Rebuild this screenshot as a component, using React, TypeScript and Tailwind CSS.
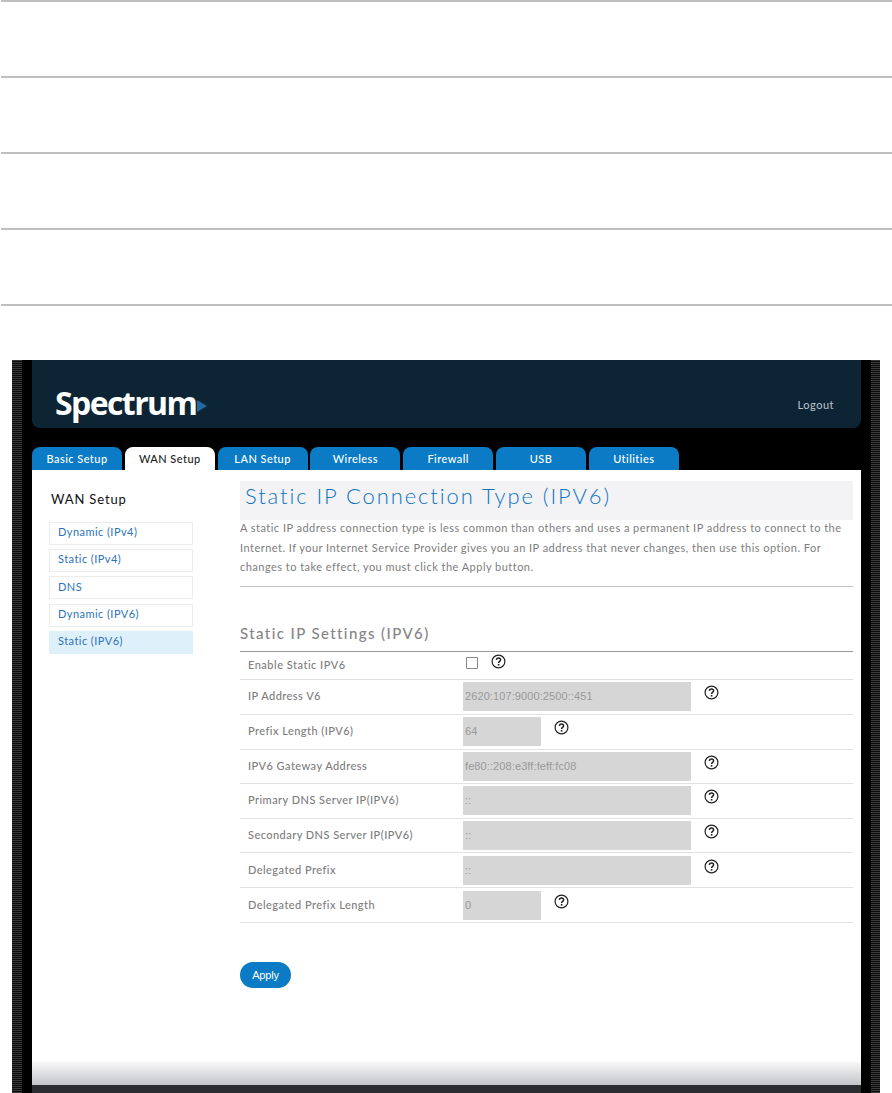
const F = "font-['Lato',_'Liberation_Sans',_sans-serif]";

function Help({ className = "" }: { className?: string }) {
  return (
    <svg width="15" height="15" viewBox="0 0 15 15" fill="none" className={className}>
      <circle cx="7.5" cy="7.5" r="6.4" stroke="#222" strokeWidth="1.2" />
      <path d="M5.4 5.9C5.5 4.6 6.4 4 7.5 4c1.2 0 2.1.7 2.1 1.8 0 1.5-2 1.6-2 3.2" stroke="#222" strokeWidth="1.5" />
      <rect x="6.8" y="10" width="1.6" height="1.6" fill="#222" />
    </svg>
  );
}

const tabs = ["Basic Setup", "WAN Setup", "LAN Setup", "Wireless", "Firewall", "USB", "Utilities"];
const side = ["Dynamic (IPv4)", "Static (IPv4)", "DNS", "Dynamic (IPV6)", "Static (IPV6)"];
const rows: { label: string; value: string; short?: boolean; h: string }[] = [
  { label: "IP Address V6", value: "2620:107:9000:2500::451", h: "h-[35px] pt-[2px]" },
  { label: "Prefix Length (IPV6)", value: "64", short: true, h: "h-[35px] pt-[2px]" },
  { label: "IPV6 Gateway Address", value: "fe80::208:e3ff:feff:fc08", h: "h-[34px] pt-[2px]" },
  { label: "Primary DNS Server IP(IPV6)", value: "::", h: "h-[35px] pt-[2px]" },
  { label: "Secondary DNS Server IP(IPV6)", value: "::", h: "h-[34px] pt-[2px]" },
  { label: "Delegated Prefix", value: "::", h: "h-[35px] pt-[3px]" },
  { label: "Delegated Prefix Length", value: "0", short: true, h: "h-[35px] pt-[3px]" },
];

const stripe = "bg-[repeating-linear-gradient(180deg,#3a3a3a_0px,#3a3a3a_1px,#0a0a0a_1px,#0a0a0a_2px)]";

export default function App() {
  return (
    <div className={`w-[892px] h-[1093px] overflow-hidden bg-white ${F}`}>
      <div className="pl-[1px] h-[360px]">
        {[0, 1, 2, 3, 4].map((i) => (
          <div key={i} className="h-[76px] border-t-2 border-[#bfbfbf]" />
        ))}
      </div>
      <div className="ml-[12px] w-[868px] h-[733px] flex bg-black">
        <div className={`${stripe} w-[10px] shrink-0`} />
        <div className="flex-1 px-[10px] flex flex-col min-w-0">
          <div className="h-[68px] shrink-0 bg-[#0d2435] rounded-b-lg flex items-center justify-between pl-[23px] pr-[27px]">
            <div className="flex items-center mt-[18px]">
              <span className="text-white text-[32px] font-bold tracking-[-1.6px] leading-none font-['Open_Sans',_sans-serif]">Spectrum</span>
              <svg width="10" height="12" viewBox="0 0 10 12" className="mt-[6px] ml-[1px]"><path d="M0 0L10 6L0 12Z" fill="#23689f" /></svg>
            </div>
            <span className="text-[11px] tracking-[0.5px] text-[#b8c4cc] mt-[22px]">Logout</span>
          </div>
          <div className="mt-[19px] h-[23px] flex gap-[2.8px] shrink-0">
            {tabs.map((t, i) => (
              <div
                key={t}
                className={`w-[90px] rounded-t-lg flex items-center justify-center pt-[2px] text-[11px] tracking-[0.45px] font-medium ${
                  i === 1 ? "bg-white text-[#222]" : "bg-[#0a7bc4] text-white"
                }`}
              >
                {t}
              </div>
            ))}
          </div>
          <div className="h-[615px] shrink-0 bg-white flex relative">
            <div className="w-[208px] shrink-0 pl-[17px] pt-[21px]">
              <div className="text-[13px] tracking-[0.85px] text-[#111] pl-[2px] leading-[16px]">WAN Setup</div>
              <div className="mt-[15px] w-[144px] flex flex-col gap-[4.2px]">
                {side.map((s, i) => (
                  <div
                    key={s}
                    className={`h-[23px] flex items-center pb-[2px] text-[11px] tracking-[0.45px] text-[#2c73b8] ${
                      i === 4 ? "bg-[#def0fa] pl-[9px]" : "border border-[#ececec] pl-[8px]"
                    }`}
                  >
                    {s}
                  </div>
                ))}
              </div>
            </div>
            <div className="w-[613px] shrink-0 pt-[11px]">
              <div className="h-[39px] bg-[#f3f3f6] pl-[5px] pt-[3px] text-[22px] leading-[24px] tracking-[1.9px] font-light text-[#0f75c0]">
                Static IP Connection Type (IPV6)
              </div>
              <p className="mt-[-2px] text-[11px] leading-[19.6px] tracking-[0.47px] text-[#7d7d7d]">
                A static IP address connection type is less common than others and uses a permanent IP address to connect to the Internet. If your Internet Service Provider gives you an IP address that never changes, then use this option. For changes to take effect, you must click the Apply button.
              </p>
              <div className="mt-[9px] border-t border-[#c4c4c4]" />
              <div className="mt-[37px] text-[15px] leading-[18px] tracking-[1.4px] text-[#858585] font-medium">Static IP Settings (IPV6)</div>
              <div className="mt-[9px] border-t border-[#999]">
                <div className="h-[28px] border-b border-[#ddd] flex">
                  <div className="w-[223px] pl-[8px] pt-[5px] text-[11px] tracking-[0.5px] text-[#7d7d7d] font-medium">Enable Static IPV6</div>
                  <div className="ml-[3px] mt-[5px] w-[12px] h-[12px] border border-[#888] bg-white rounded-[1px]" />
                  <Help className="ml-[13px] mt-[2px]" />
                </div>
                {rows.map((r) => (
                  <div key={r.label} className={`${r.h} border-b border-[#e2e2e2]`}>
                    <div className="h-[29px] flex items-center">
                      <div className="w-[223px] pl-[8px] text-[11px] tracking-[0.45px] text-[#7d7d7d] font-medium">{r.label}</div>
                      <div className={`${r.short ? "w-[78px]" : "w-[228px]"} h-[29px] bg-[#d6d6d6] pl-[2px] flex items-center text-[11px] text-[#999] font-['Liberation_Sans',_sans-serif] tracking-[0.1px]`}>
                        {r.value}
                      </div>
                      <Help className="ml-[13px] mb-[8px]" />
                    </div>
                  </div>
                ))}
              </div>
              <button className="mt-[39px] block w-[51px] h-[26px] rounded-full bg-[#0a7bc4] text-white text-[11px] tracking-[-0.2px] font-['Liberation_Sans',_sans-serif]">
                Apply
              </button>
            </div>
            <div className="absolute left-0 right-0 bottom-0 h-[23px] bg-gradient-to-b from-[#f8f8f8] to-[#c4c5c9]" />
          </div>
          <div className="flex-1 bg-[#2a2c30]" />
        </div>
        <div className={`${stripe} w-[9px] shrink-0`} />
      </div>
    </div>
  );
}
